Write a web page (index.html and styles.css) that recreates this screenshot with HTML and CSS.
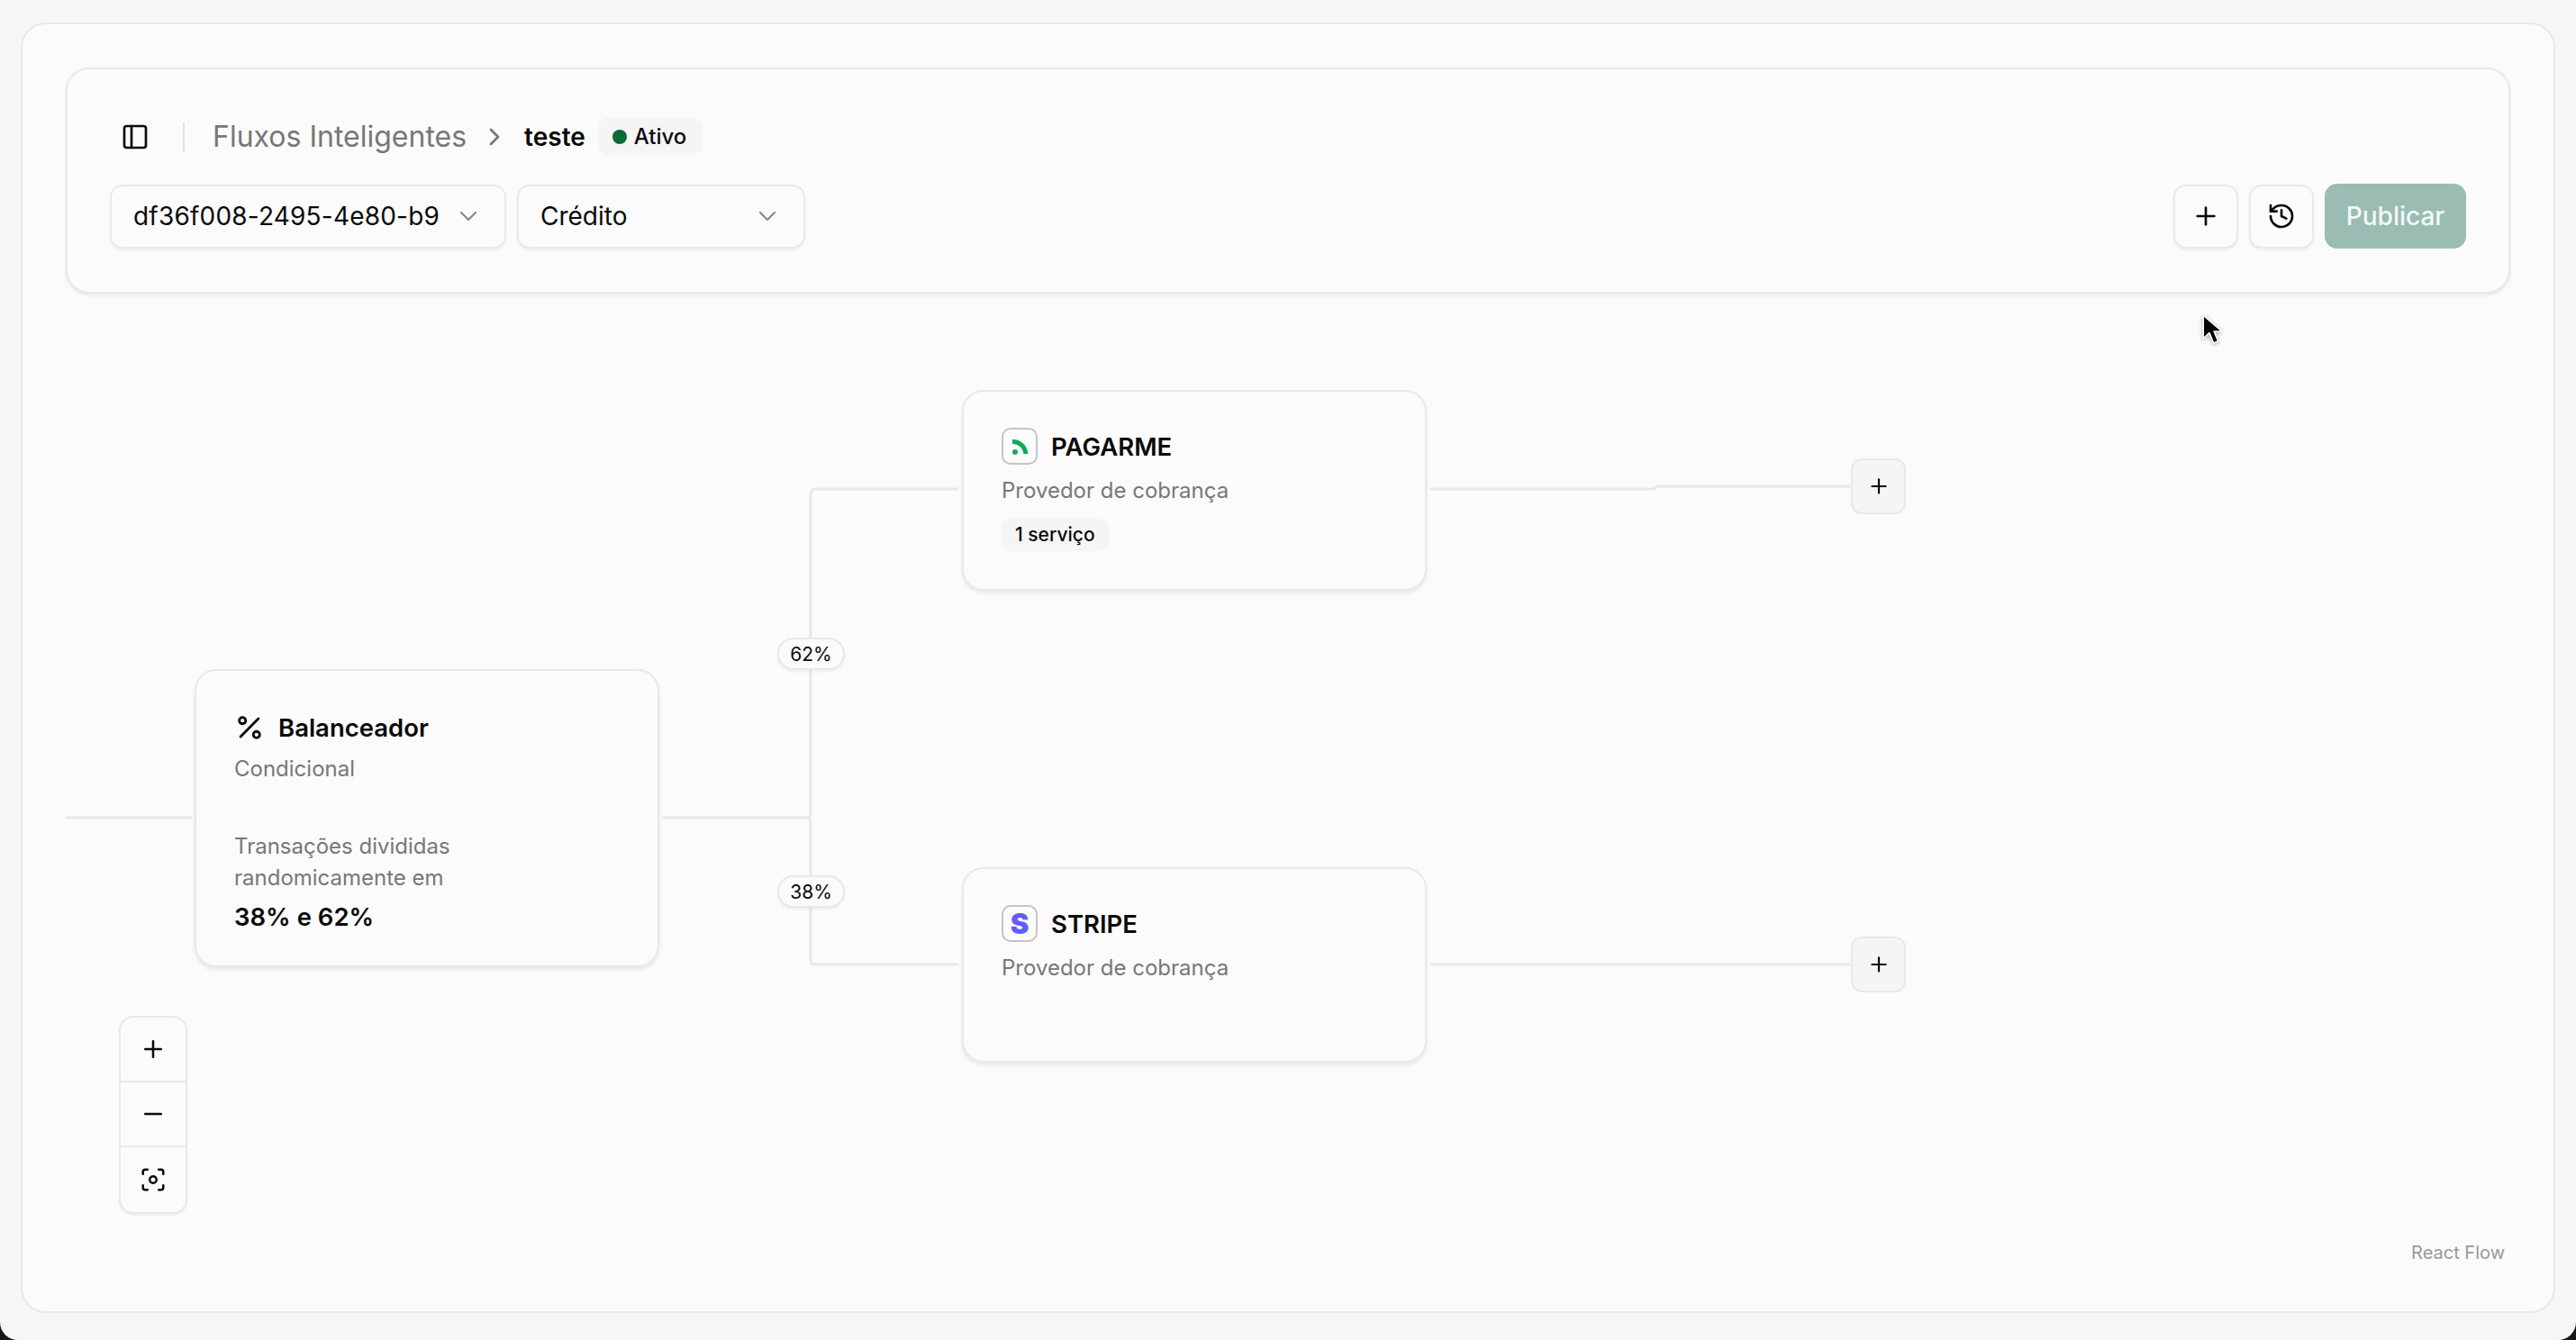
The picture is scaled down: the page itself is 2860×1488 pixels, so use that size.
FILE: index.html
```html
<!DOCTYPE html>
<html lang="en">
<head>
    <meta charset="UTF-8">
    <title>Fluxos Inteligentes</title>
    <link rel="stylesheet" href="styles.css">
</head>
<body>
    <div class="window">
        <main class="panel">
            <header class="topbar">
                <div class="crumbs">
                    <svg class="icon-32" viewBox="0 0 24 24"><rect x="3" y="3" width="18" height="18" rx="2"/><path d="M9 3v18"/></svg>
                    <span class="crumb-sep"></span>
                    <span class="crumb-root">Fluxos Inteligentes</span>
                    <svg class="icon-32 crumb-chevron" viewBox="0 0 24 24"><path d="m9 18 6-6-6-6"/></svg>
                    <span class="crumb-current">teste</span>
                    <span class="status"><span class="status-dot"></span>Ativo</span>
                </div>
                <div class="actions">
                    <button class="select select-id">df36f008-2495-4e80-b9<svg class="chevron" viewBox="0 0 24 24"><path d="m6 9 6 6 6-6"/></svg></button>
                    <button class="select select-type">Crédito<svg class="chevron" viewBox="0 0 24 24"><path d="m6 9 6 6 6-6"/></svg></button>
                    <span class="spacer"></span>
                    <button class="icon-btn"><svg class="icon-32" viewBox="0 0 24 24"><path d="M5 12h14"/><path d="M12 5v14"/></svg></button>
                    <button class="icon-btn"><svg class="icon-32" viewBox="0 0 24 24"><path d="M3 12a9 9 0 1 0 9-9 9.75 9.75 0 0 0-6.74 2.74L3 8"/><path d="M3 3v5h5"/><path d="M12 7v5l4 2"/></svg></button>
                    <button class="publish">Publicar</button>
                </div>
            </header>

            <div class="canvas">
                <svg class="edges" viewBox="0 0 2860 1488">
                    <path d="M74 908H212"/>
                    <path d="M737 908H895Q900 908 900 903V548Q900 543 905 543H1063"/>
                    <path d="M737 908H895Q900 908 900 913V1066Q900 1071 905 1071H1063"/>
                    <path d="M1589 543H1836L1840 540H2056"/>
                    <path d="M1589 1071H2056"/>
                </svg>

                <div class="node node-balancer">
                    <div class="node-title">
                        <svg class="icon-34" viewBox="0 0 24 24"><path d="M19 5 5 19"/><circle cx="6.5" cy="6.5" r="2.5"/><circle cx="17.5" cy="17.5" r="2.5"/></svg>
                        Balanceador
                    </div>
                    <div class="node-sub">Condicional</div>
                    <div class="node-desc">Transações divididas<br>randomicamente em</div>
                    <div class="node-split">38% e 62%</div>
                </div>

                <div class="node node-pagarme">
                    <div class="node-title">
                        <span class="logo">
                            <svg class="logo-pagarme" viewBox="0 0 36 37"><circle cx="13" cy="25" r="3"/><path d="M10 13.500C18 13 24 19 25 27"/></svg>
                        </span>
                        PAGARME
                    </div>
                    <div class="node-sub">Provedor de cobrança</div>
                    <span class="node-badge">1 serviço</span>
                </div>

                <div class="node node-stripe">
                    <div class="node-title">
                        <span class="logo logo-stripe">S</span>
                        STRIPE
                    </div>
                    <div class="node-sub">Provedor de cobrança</div>
                </div>

                <span class="edge-label label-top">62%</span>
                <span class="edge-label label-bottom">38%</span>

                <button class="add-btn add-top"><svg viewBox="0 0 24 24"><path d="M5 12h14"/><path d="M12 5v14"/></svg></button>
                <button class="add-btn add-bottom"><svg viewBox="0 0 24 24"><path d="M5 12h14"/><path d="M12 5v14"/></svg></button>

                <div class="zoom-controls">
                    <button><svg class="icon-30" viewBox="0 0 24 24"><path d="M5 12h14"/><path d="M12 5v14"/></svg></button>
                    <button><svg class="icon-30" viewBox="0 0 24 24"><path d="M5 12h14"/></svg></button>
                    <button><svg class="icon-30" viewBox="0 0 24 24"><circle cx="12" cy="12" r="3"/><path d="M3 7V5a2 2 0 0 1 2-2h2"/><path d="M17 3h2a2 2 0 0 1 2 2v2"/><path d="M21 17v2a2 2 0 0 1-2 2h-2"/><path d="M7 21H5a2 2 0 0 1-2-2v-2"/></svg></button>
                </div>

                <span class="attribution">React Flow</span>

                <svg class="cursor" viewBox="0 0 24 36"><path d="M3 2v25l6.500-6 4.500 11 5-2-4.500-10.500H23z"/></svg>
            </div>
        </main>
    </div>
</body>
</html>
```

FILE: styles.css
```css
* {
    box-sizing: border-box;
}
body {
    margin: 0;
    background: #16181a;
    font-family: Inter, "Liberation Sans", sans-serif;
    color: #0a0a0a;
}
button {
    font-family: inherit;
    color: inherit;
    cursor: pointer;
    padding: 0;
}
svg {
    fill: none;
    stroke: currentColor;
    stroke-width: 2;
    stroke-linecap: round;
    stroke-linejoin: round;
    flex: none;
}
.icon-30 { width: 30px; height: 30px; }
.icon-32 { width: 32px; height: 32px; }
.icon-34 { width: 34px; height: 34px; }

.window {
    height: 1488px;
    padding: 25px 23px 30px 23px;
    background: #f6f6f6;
    border-radius: 0 0 20px 20px;
    overflow: hidden;
}
.panel {
    position: relative;
    height: 100%;
    padding: 48px;
    background: #fbfbfb;
    border: 2px solid #e9e9e9;
    border-radius: 28px;
}

/* top bar */
.topbar {
    height: 251px;
    padding: 53px 47px 0;
    background: #fbfbfb;
    border: 2px solid #e9e9e9;
    border-radius: 26px;
    box-shadow: 0 2px 4px rgba(0, 0, 0, 0.08);
}
.crumbs {
    display: flex;
    align-items: center;
    height: 43px;
    padding-left: 12px;
}
.crumb-sep {
    width: 2px;
    height: 32px;
    margin: 0 31px 0 37px;
    background: #e2e2e2;
}
.crumb-root {
    font-size: 32px;
    color: #777;
}
.crumb-chevron {
    margin: 0 17px 0 15px;
    color: #777;
}
.crumb-current {
    font-size: 28px;
    font-weight: 600;
}
.status {
    display: flex;
    align-items: center;
    gap: 8px;
    height: 43px;
    margin-left: 14px;
    padding: 0 18px 0 16px;
    background: #f5f5f5;
    border-radius: 14px;
    font-size: 24px;
    font-weight: 500;
}
.status-dot {
    width: 16px;
    height: 16px;
    border-radius: 50%;
    background: #0b6b35;
}
.actions {
    display: flex;
    align-items: center;
    margin-top: 31px;
}
.select {
    display: flex;
    align-items: center;
    justify-content: space-between;
    height: 71px;
    padding: 0 24px 0 24px;
    background: #fbfbfb;
    border: 2px solid #e9e9e9;
    border-radius: 14px;
    box-shadow: 0 2px 3px rgba(0, 0, 0, 0.05);
    font-size: 28px;
}
.select-id { width: 440px; margin-right: 12px; letter-spacing: 0.2px; }
.select-type { width: 320px; }
.chevron {
    width: 32px;
    height: 32px;
    color: #888;
    stroke-width: 1.6;
}
.spacer {
    flex: 1;
}
.icon-btn {
    display: flex;
    align-items: center;
    justify-content: center;
    width: 72px;
    height: 71px;
    margin-right: 12px;
    background: #fbfbfb;
    border: 2px solid #e9e9e9;
    border-radius: 14px;
    box-shadow: 0 2px 3px rgba(0, 0, 0, 0.05);
}
.publish {
    width: 157px;
    height: 72px;
    background: #9abcb3;
    border: none;
    border-radius: 14px;
    color: #f4f8f7;
    font-size: 28px;
    font-weight: 500;
}

/* flow canvas: everything in here sits at its own place */
.canvas {
    position: absolute;
    inset: 0;
}
.edges {
    position: absolute;
    left: -25px;
    top: -27px;
    width: 2860px;
    height: 1488px;
    color: #e8e8e8;
    stroke-width: 3;
}
.node {
    position: absolute;
    padding: 40px 42px;
    background: #fbfbfb;
    border: 2px solid #e9e9e9;
    border-radius: 24px;
    box-shadow: 0 3px 4px rgba(0, 0, 0, 0.08);
}
.node-balancer { left: 191px; top: 716px; width: 516px; height: 331px; padding-top: 42px; }
.node-pagarme { left: 1043px; top: 406px; width: 516px; height: 223px; }
.node-stripe { left: 1043px; top: 936px; width: 516px; height: 217px; }
.node-title {
    display: flex;
    align-items: center;
    gap: 15px;
    height: 41px;
    font-size: 27.500px;
    font-weight: 600;
}
.logo {
    display: flex;
    align-items: center;
    justify-content: center;
    width: 40px;
    height: 41px;
    border: 2px solid #c4c4c4;
    border-radius: 10px;
}
.logo-pagarme {
    width: 36px;
    height: 37px;
    color: #14a85c;
    stroke-width: 5;
    stroke-linecap: butt;
}
.logo-pagarme circle {
    fill: #14a85c;
    stroke: none;
}
.logo-stripe {
    color: #635bff;
    font-size: 31px;
    font-weight: 900;
}
.node-sub {
    margin-top: 12px;
    font-size: 24px;
    line-height: 33px;
    color: #777;
}
.node-balancer .node-sub {
    margin-top: 9px;
}
.node-badge {
    display: inline-block;
    margin-top: 15px;
    padding: 0 15px;
    height: 36px;
    line-height: 36px;
    background: #f5f5f5;
    border-radius: 10px;
    font-size: 21px;
    font-weight: 500;
}
.node-desc {
    margin-top: 52px;
    font-size: 24px;
    line-height: 35px;
    color: #777;
}
.node-split {
    margin-top: 8px;
    font-size: 27.500px;
    line-height: 36px;
    font-weight: 600;
}
.edge-label {
    position: absolute;
    left: 838px;
    width: 75px;
    height: 36px;
    line-height: 34px;
    text-align: center;
    background: #fbfbfb;
    border: 2px solid #e9e9e9;
    border-radius: 18px;
    box-shadow: 0 2px 3px rgba(0, 0, 0, 0.06);
    font-size: 21px;
}
.label-top { top: 681px; }
.label-bottom { top: 945px; }
.add-btn {
    position: absolute;
    left: 2030px;
    display: flex;
    align-items: center;
    justify-content: center;
    width: 61px;
    height: 62px;
    background: #f5f5f5;
    border: 2px solid #e9e9e9;
    border-radius: 12px;
}
.add-btn svg {
    width: 26px;
    height: 26px;
}
.add-top { top: 482px; }
.add-bottom { top: 1013px; }
.zoom-controls {
    position: absolute;
    left: 107px;
    top: 1101px;
    width: 76px;
    background: #fbfbfb;
    border: 2px solid #e9e9e9;
    border-radius: 16px;
    box-shadow: 0 2px 3px rgba(0, 0, 0, 0.05);
    overflow: hidden;
}
.zoom-controls button {
    display: flex;
    align-items: center;
    justify-content: center;
    width: 100%;
    height: 72px;
    background: none;
    border: none;
    border-bottom: 2px solid #e9e9e9;
}
.zoom-controls button:last-child {
    border-bottom: none;
}
.attribution {
    position: absolute;
    right: 54px;
    bottom: 53px;
    font-size: 20px;
    color: #999;
}
.cursor {
    position: absolute;
    left: 2418px;
    top: 321px;
    width: 25px;
    height: 37px;
    fill: #000;
    stroke: #fff;
    stroke-width: 1.5;
    filter: drop-shadow(0 1px 2px rgba(0, 0, 0, 0.35));
}
```
